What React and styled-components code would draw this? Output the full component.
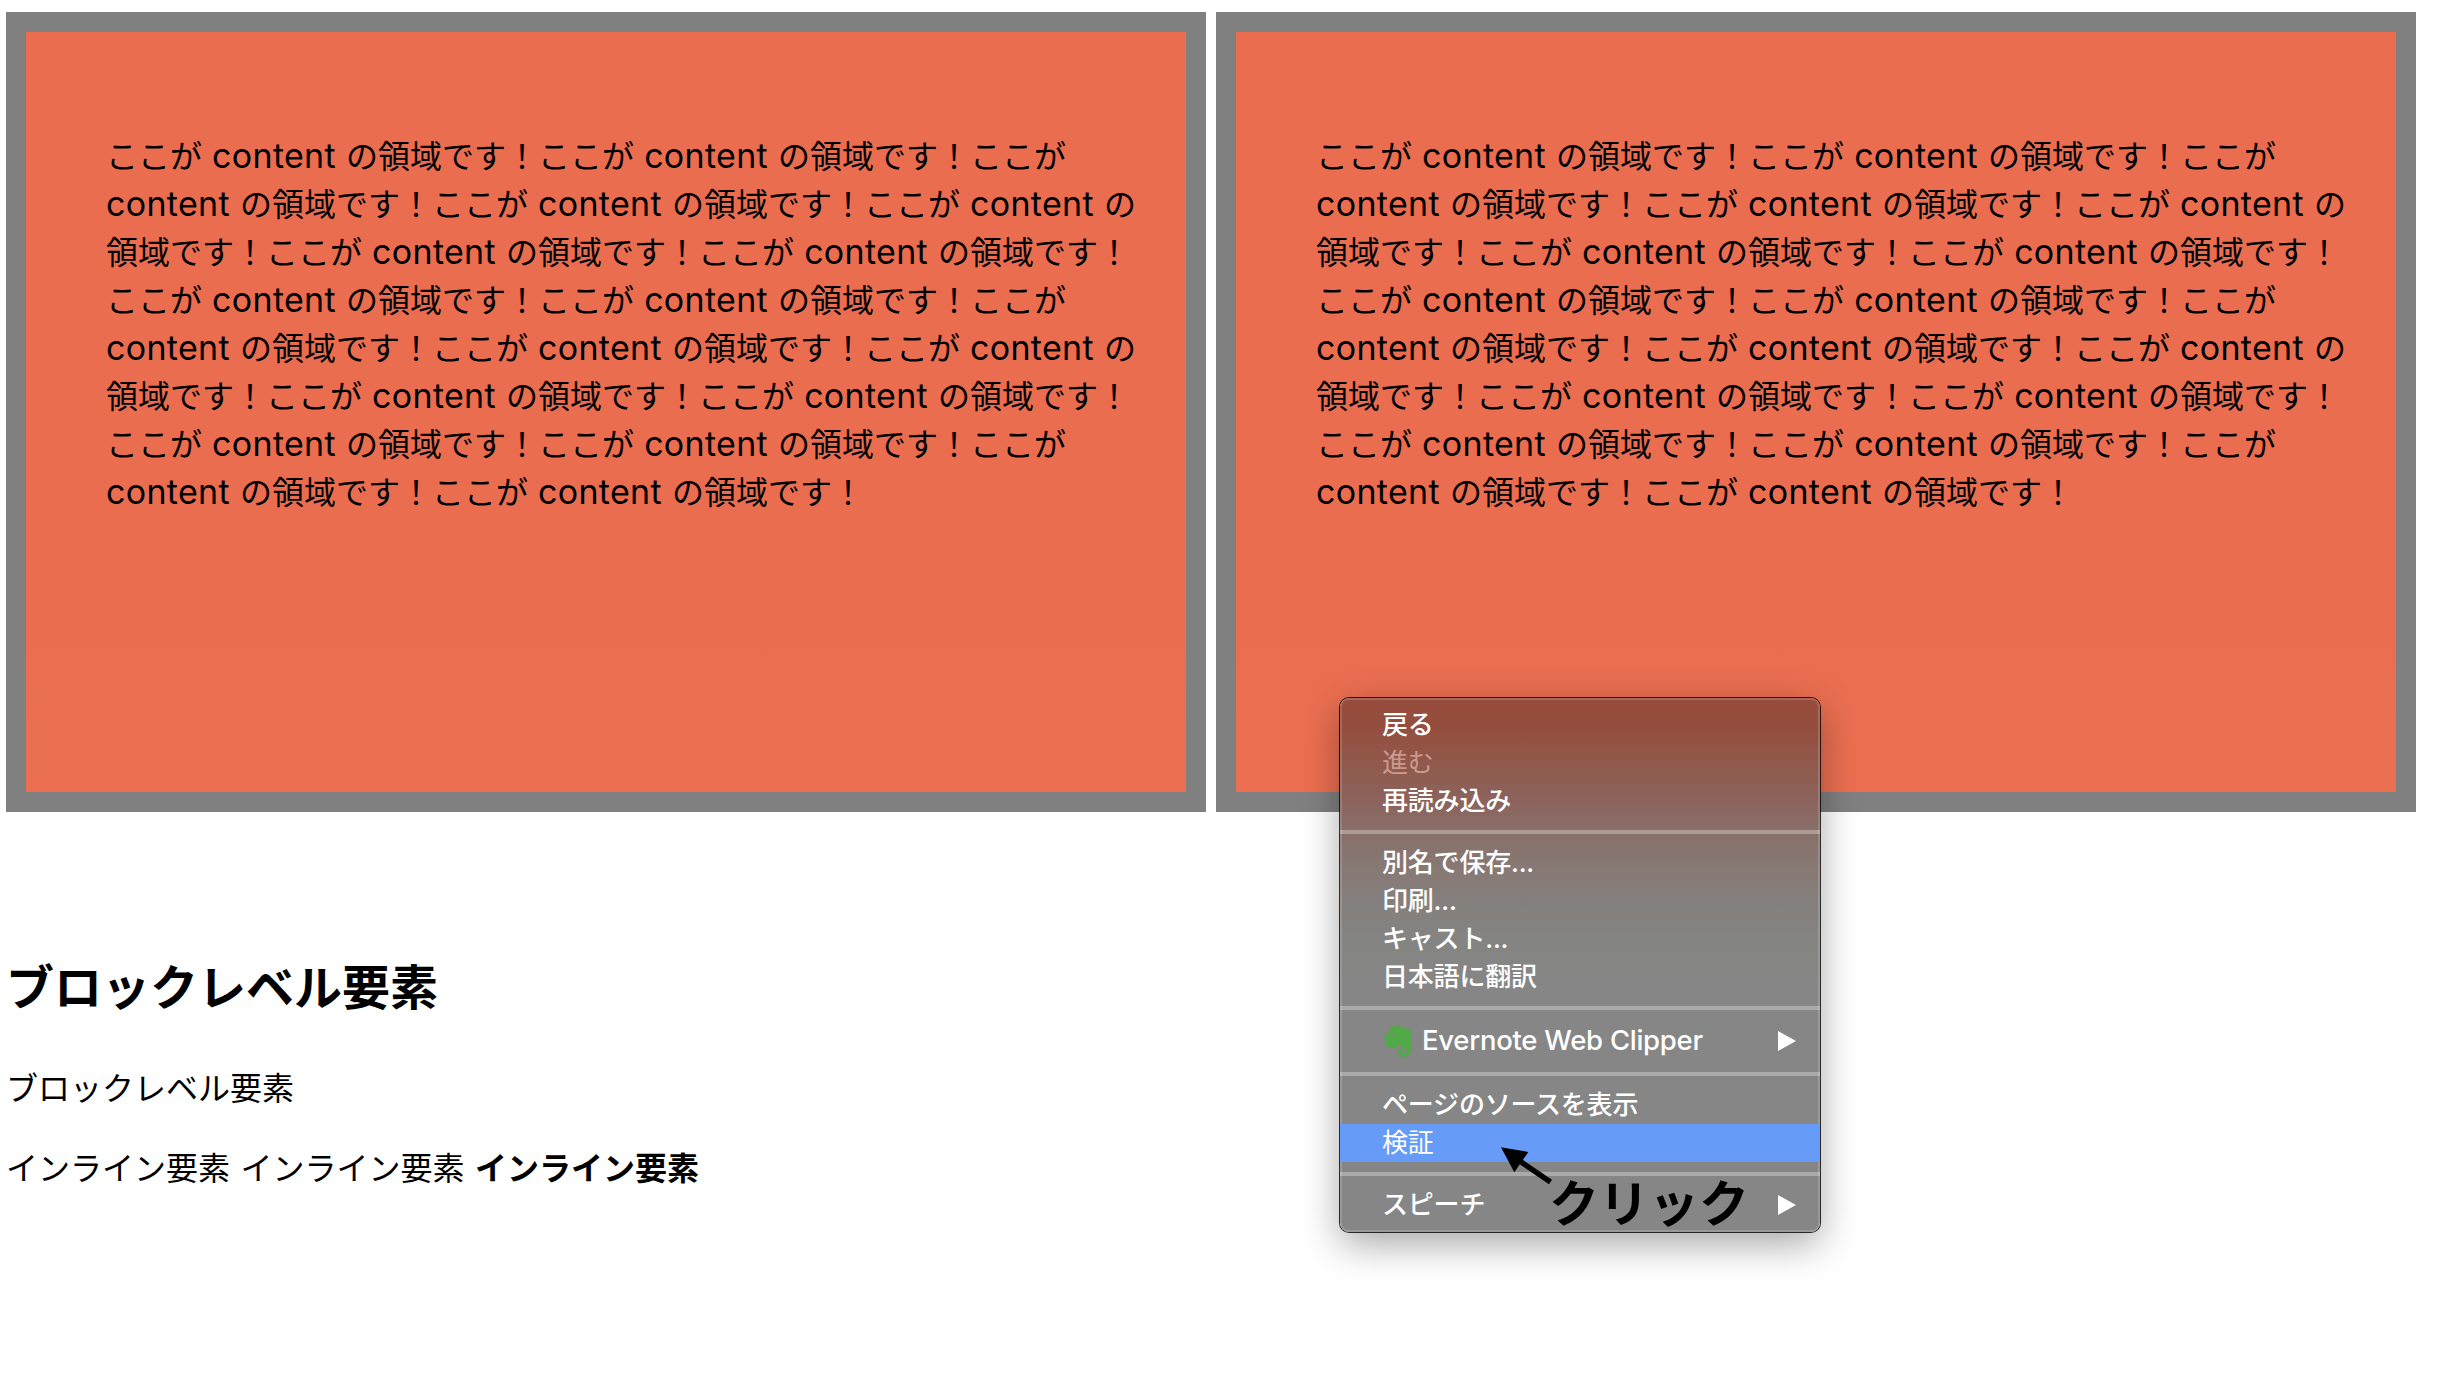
import React from "react";
import styled, { createGlobalStyle, css } from "styled-components";
import { FaEvernote } from "react-icons/fa";

const GlobalStyle = createGlobalStyle`
  *, *::before, *::after { box-sizing: border-box; }
  body {
    margin: 0;
    background: #fff;
    color: #000;
    font-family: Inter, "Noto Sans CJK JP", sans-serif;
    font-size: 32px;
    line-height: 48px;
  }
`;

const Page = styled.main`
  position: relative;
  height: 1394px;
  padding: 12px 6px 0;
  overflow: hidden;
`;

const Boxes = styled.div`
  display: flex;
  gap: 10px;
`;

const Box = styled.div`
  flex: none;
  width: 1200px;
  height: 800px;
  padding: 101px 50px 79px 80px;
  border: 20px solid #808080;
  background: linear-gradient(#ea6d50 80%, #eb6f51 90%);
  font-weight: 400;
  word-spacing: 1.1px;
  white-space: nowrap;
`;

const Latin = styled.span`
  font-size: 34px;
  line-height: 1;
  letter-spacing: 0.3px;
`;

const Heading = styled.h2`
  margin: 140px 0 0;
  font-size: 48px;
  line-height: 72px;
  font-weight: 700;
`;

const Paragraph = styled.p`
  margin: ${(p) => p.$top}px 0 0;
  font-weight: 400;
  word-spacing: 1.5px;
`;

const Menu = styled.nav`
  position: absolute;
  left: 1340px;
  top: 698px;
  width: 480px;
  height: 534px;
  padding: 8px 0;
  border-radius: 9px;
  background: linear-gradient(
    #964c3c 0, #954e3e 30px, #90594c 66px, #8b645e 105px, #896f69 134px,
    #877974 170px, #84807e 205px, #848482 240px, #868686 290px, #868686 100%
  );
  box-shadow:
    inset 0 0 0 2px rgba(255, 255, 255, 0.16),
    0 0 0 1px rgba(0, 0, 0, 0.8),
    0 12px 38px rgba(0, 0, 0, 0.35);
`;

const Item = styled.div`
  display: flex;
  align-items: center;
  height: ${(p) => (p.$tall ? 42 : 38)}px;
  padding: 0 24px 0 42px;
  color: #fff;
  font-size: 26px;
  line-height: 38px;
  font-weight: 500;
  letter-spacing: -0.2px;
  ${(p) => p.$disabled && css`
    color: #cc998c;
    font-weight: 400;
  `}
  ${(p) => p.$active && css`
    background: #669bf8;
    font-weight: 400;
  `}
`;

const Separator = styled.hr`
  height: 4px;
  margin: 10px 0;
  border: 0;
  background: rgba(255, 255, 255, 0.3);
`;

const Elephant = styled(FaEvernote)`
  flex: none;
  width: 36px;
  height: 36px;
  margin-left: -2px;
  color: #52a947;
  stroke: #52a947;
  stroke-width: 6px;
`;

const Clipper = styled.span`
  margin: -2px 0 0 6px;
  font-size: 27.5px;
  letter-spacing: -0.27px;
`;

const Chevron = styled.span`
  width: 18px;
  height: 20px;
  margin-left: auto;
  background: #fff;
  clip-path: polygon(0 0, 100% 50%, 0 100%);
`;

const Arrow = styled.svg`
  position: absolute;
  left: 1500px;
  top: 1145px;
`;

const Note = styled.div`
  position: absolute;
  left: 1549px;
  top: 1168px;
  font-size: 50px;
  line-height: 72px;
  font-weight: 700;
`;

const C = () => <Latin>content</Latin>;

const Copy = () => (
  <>
    ここが <C /> の領域です！ここが <C /> の領域です！ここが<br />
    <C /> の領域です！ここが <C /> の領域です！ここが <C /> の<br />
    領域です！ここが <C /> の領域です！ここが <C /> の領域です！<br />
    ここが <C /> の領域です！ここが <C /> の領域です！ここが<br />
    <C /> の領域です！ここが <C /> の領域です！ここが <C /> の<br />
    領域です！ここが <C /> の領域です！ここが <C /> の領域です！<br />
    ここが <C /> の領域です！ここが <C /> の領域です！ここが<br />
    <C /> の領域です！ここが <C /> の領域です！
  </>
);

export default function App() {
  return (
    <>
      <GlobalStyle />
      <Page>
        <Boxes>
          <Box><Copy /></Box>
          <Box><Copy /></Box>
        </Boxes>
        <Heading>ブロックレベル要素</Heading>
        <Paragraph $top={41}>ブロックレベル要素</Paragraph>
        <Paragraph $top={32}>
          <span>インライン要素</span> <span>インライン要素</span> <b>インライン要素</b>
        </Paragraph>

        <Menu>
          <Item>戻る</Item>
          <Item $disabled>進む</Item>
          <Item>再読み込み</Item>
          <Separator />
          <Item>別名で保存...</Item>
          <Item>印刷...</Item>
          <Item>キャスト...</Item>
          <Item>日本語に翻訳</Item>
          <Separator />
          <Item $tall>
            <Elephant />
            <Clipper>Evernote Web Clipper</Clipper>
            <Chevron />
          </Item>
          <Separator />
          <Item>ページのソースを表示</Item>
          <Item $active>検証</Item>
          <Separator />
          <Item>スピーチ<Chevron /></Item>
        </Menu>

        <Arrow width="54" height="42" viewBox="0 0 54 42">
          <path d="M1 2.3 28.3 7 14.3 27.3Z" />
          <path d="M19 15.5 50.5 37" stroke="#000" strokeWidth="5.4" />
        </Arrow>
        <Note>クリック</Note>
      </Page>
    </>
  );
}
